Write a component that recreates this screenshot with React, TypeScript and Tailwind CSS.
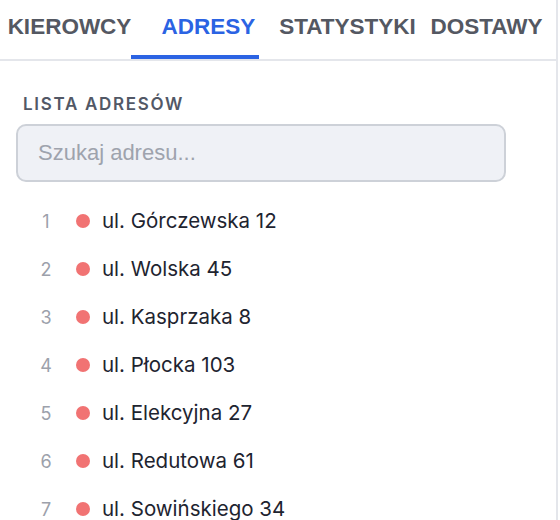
const tabs = ['KIEROWCY', 'ADRESY', 'STATYSTYKI', 'DOSTAWY']

const addresses = [
  'ul. Górczewska 12',
  'ul. Wolska 45',
  'ul. Kasprzaka 8',
  'ul. Płocka 103',
  'ul. Elekcyjna 27',
  'ul. Redutowa 61',
  'ul. Sowińskiego 34',
]

export default function App() {
  const active = 'ADRESY'
  return (
    <div className="h-[520px] w-[560px] overflow-hidden bg-white">
      <div className="h-full w-[558px] border-r-2 border-[#e4e6eb]">
        {/* zakładki */}
        <div className="relative flex h-[61px] border-b-2 border-[#e4e6eb] font-['Liberation_Sans',Arial,sans-serif]">
          {tabs.map((t) => (
            <div
              key={t}
              className={
                'flex flex-1 justify-center whitespace-nowrap pt-[14px] text-[22.5px] font-bold leading-[25px] ' +
                (t === active ? 'text-[#2b63e3]' : 'text-[#545862]')
              }
            >
              {t}
            </div>
          ))}
          <div className="absolute bottom-0 left-[131px] h-1 w-[128px] bg-[#2b63e3]" />
        </div>

        <div className="font-['Inter',sans-serif]">
          <div className="pl-[23px] pt-[31px] text-[17px] font-semibold uppercase leading-[24px] tracking-[0.1em] text-[#525866]">
            Lista adresów
          </div>
          <div className="mt-[8px] px-4">
            <input
              placeholder="Szukaj adresu..."
              className="h-[58px] w-[490px] rounded-[10px] border-2 border-[#cdd1d8] bg-[#eff1f6] pl-[20px] font-['Liberation_Sans',Arial,sans-serif] text-[22px] text-[#1f2937] outline-none placeholder:text-[#9ea3ad]"
            />
          </div>

          <ul className="mt-[15px]">
            {addresses.map((a, i) => (
              <li key={a} className="flex h-[48px] items-center pl-[36px]">
                <span className="w-[20px] text-center text-[18px] text-[#9ca1ab]">{i + 1}</span>
                <span className="ml-[20px] h-[14px] w-[14px] rounded-full bg-[#f17373]" />
                <span className="ml-[12px] text-[20.5px] text-[#1e2430]">{a}</span>
              </li>
            ))}
          </ul>
        </div>
      </div>
    </div>
  )
}
